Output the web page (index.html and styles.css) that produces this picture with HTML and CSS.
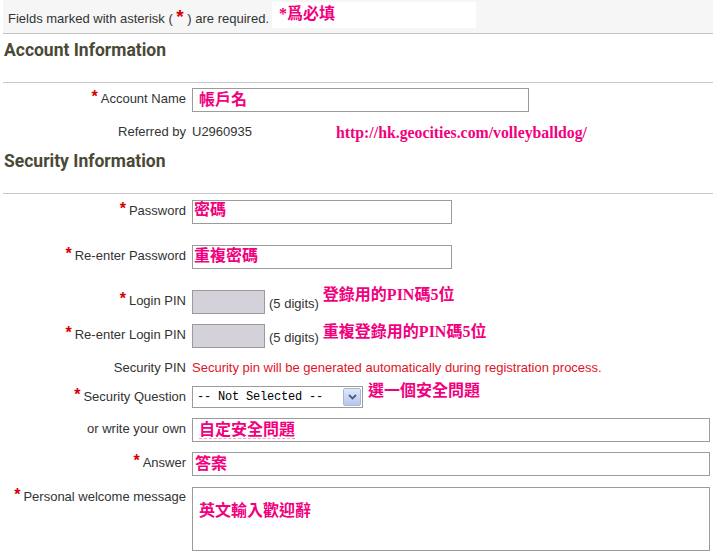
FILE: index.html
```html
<!DOCTYPE html>
<html lang="zh-Hant">
<head>
<meta charset="utf-8">
<title>Registration</title>
<link rel="stylesheet" href="styles.css">
</head>
<body>
<div class="topbar">
  <span class="note">Fields marked with asterisk ( <span class="star">*</span> ) are required.</span>
  <span class="tag"><span class="pink">*爲必填</span></span>
</div>

<h2 class="section sec-acct">Account Information</h2>

<div class="row r-acct">
  <div class="lbl"><span class="req">*</span>Account Name</div>
  <div class="box w-acct"><span class="pink p-acct">帳戶名</span></div>
</div>
<div class="row r-ref">
  <div class="lbl plain">Referred by</div>
  <div class="val">U2960935</div>
  <div class="url">http://hk.geocities.com/volleyballdog/</div>
</div>

<h2 class="section sec-sec">Security Information</h2>

<div class="row r-pw">
  <div class="lbl"><span class="req">*</span>Password</div>
  <div class="box w-pw"><span class="pink p-pw">密碼</span></div>
</div>
<div class="row r-pw2">
  <div class="lbl"><span class="req">*</span>Re-enter Password</div>
  <div class="box w-pw"><span class="pink p-pw2">重複密碼</span></div>
</div>
<div class="row r-pin">
  <div class="lbl"><span class="req">*</span>Login PIN</div>
  <div class="box w-pin"></div>
  <span class="hint">(5 digits)</span>
  <span class="pink note1">登錄用的PIN碼5位</span>
</div>
<div class="row r-pin2">
  <div class="lbl"><span class="req">*</span>Re-enter Login PIN</div>
  <div class="box w-pin"></div>
  <span class="hint">(5 digits)</span>
  <span class="pink note2">重複登錄用的PIN碼5位</span>
</div>
<div class="row r-spin">
  <div class="lbl plain">Security PIN</div>
  <div class="warn">Security pin will be generated automatically during registration process.</div>
</div>
<div class="row r-q">
  <div class="lbl"><span class="req">*</span>Security Question</div>
  <div class="select">
    <span class="seltxt">-- Not Selected --</span>
    <span class="arrow"><svg width="9" height="6" viewBox="0 0 9 6"><path d="M1 1 L4.5 4.5 L8 1" fill="none" stroke="#4a5d80" stroke-width="1.8"/></svg></span>
  </div>
  <span class="pink note3">選一個安全問題</span>
</div>
<div class="row r-own">
  <div class="lbl">or write your own</div>
  <div class="box w-full"><span class="pink p-own">自定安全問題</span></div>
</div>
<div class="row r-ans">
  <div class="lbl"><span class="req">*</span>Answer</div>
  <div class="box w-full"><span class="pink p-ans">答案</span></div>
</div>
<div class="row r-msg">
  <div class="lbl lbl-msg"><span class="req">*</span>Personal welcome message</div>
  <div class="box w-full area"><span class="pink p-msg">英文輸入歡迎辭</span></div>
</div>
</body>
</html>
```

FILE: styles.css
```css
* { box-sizing: border-box; }

body {
  margin: 0;
  background: #fff;
  color: #333;
  font-family: "Liberation Sans", Arial, sans-serif;
  font-size: 13px;
  line-height: 15px;
}

.topbar {
  margin-left: 3px;
  height: 34px;
  background: #f6f6f6;
  border-bottom: 1px solid #c4c4c4;
  display: flex;
  align-items: flex-start;
}

.note {
  margin: 11px 0 0 5px;
  white-space: nowrap;
}

.star {
  color: #d80000;
  font-weight: bold;
  font-size: 19px;
  line-height: 10px;
}

.tag {
  margin: 2px 0 0 3px;
  width: 204px;
  height: 26px;
  background: #fff;
  padding: 3px 0 0 7px;
}

.pink {
  color: #f2007e;
  font-family: "Liberation Serif", "Noto Sans CJK TC", serif;
  font-weight: bold;
  font-size: 16px;
  line-height: 18px;
  white-space: nowrap;
  display: inline-block;
}

.section {
  margin: 0 0 0 3px;
  padding: 0 0 22px 1px;
  border-bottom: 1px solid #cacaca;
  font: bold 17.5px/20px Roboto, sans-serif;
  color: #4a4936;
}

.sec-acct { margin-top: 6px; }
.sec-sec { margin-top: 11px; }

.row {
  display: flex;
  align-items: flex-start;
}

.lbl {
  flex: none;
  width: 186px;
  text-align: right;
  padding-top: 3px;
  white-space: nowrap;
}

.lbl.plain { padding-top: 0; }
.lbl-msg { padding-top: 2px; }

.req {
  color: #d40000;
  font-weight: bold;
  font-size: 16px;
  line-height: 10px;
  vertical-align: 1px;
  margin-right: 3px;
}

.box {
  flex: none;
  margin-left: 6px;
  height: 24px;
  border: 1px solid #9b9b9b;
  background: #fff;
}

.w-acct { width: 337px; }
.w-pw { width: 260px; }
.w-pin { width: 73px; background: #d5d1da; }
.w-full { width: 518px; }
.area { height: 64px; }

.p-acct { margin: 2px 0 0 6px; }
.p-pw { margin: 0 0 0 1px; }
.p-pw2 { margin: 1px 0 0 1px; }
.p-own {
  margin: 2px 0 0 6px;
  text-decoration: underline dashed #f7a0c8;
  text-decoration-thickness: 1px;
  text-underline-offset: 3px;
}
.p-ans { margin: 2px 0 0 2px; }
.p-msg { margin: 14px 0 0 6px; }

.val {
  flex: none;
  margin-left: 6px;
  width: 144px;
}

.url {
  margin-top: 1px;
  color: #f2007e;
  font: bold 15.8px/15px "Liberation Serif", serif;
  white-space: nowrap;
}

.hint {
  margin: 6px 0 0 4px;
  white-space: nowrap;
}

.note1 { margin: -4px 0 0 4px; }
.note2 { margin: -1px 0 0 4px; }
.note3 { margin: -4px 0 0 5px; }

.warn {
  margin-left: 6px;
  color: #e2141f;
  white-space: nowrap;
}

.select {
  flex: none;
  margin-left: 6px;
  width: 171px;
  height: 22px;
  border: 1px solid #9b9b9b;
  background: #fff;
  display: flex;
  align-items: center;
  padding: 0 1px 0 4px;
  font-family: "Liberation Mono", monospace;
  font-size: 12px;
  letter-spacing: -0.2px;
  color: #000;
}

.seltxt {
  flex: 1;
  white-space: pre;
}

.arrow {
  flex: none;
  width: 18px;
  height: 18px;
  border: 1px solid #a3b8e0;
  border-radius: 2px;
  background: linear-gradient(#dfe8f9, #b6c7eb);
  display: flex;
  align-items: center;
  justify-content: center;
}

.r-acct { margin-top: 5px; }
.r-ref { margin-top: 12px; }
.r-pw { margin-top: 6px; }
.r-pw2 { margin-top: 21px; }
.r-pin { margin-top: 21px; }
.r-pin2 { margin-top: 10px; }
.r-spin { margin-top: 12px; }
.r-q { margin-top: 11px; }
.r-own { margin-top: 10px; }
.r-ans { margin-top: 10px; }
.r-msg { margin-top: 11px; }
```
